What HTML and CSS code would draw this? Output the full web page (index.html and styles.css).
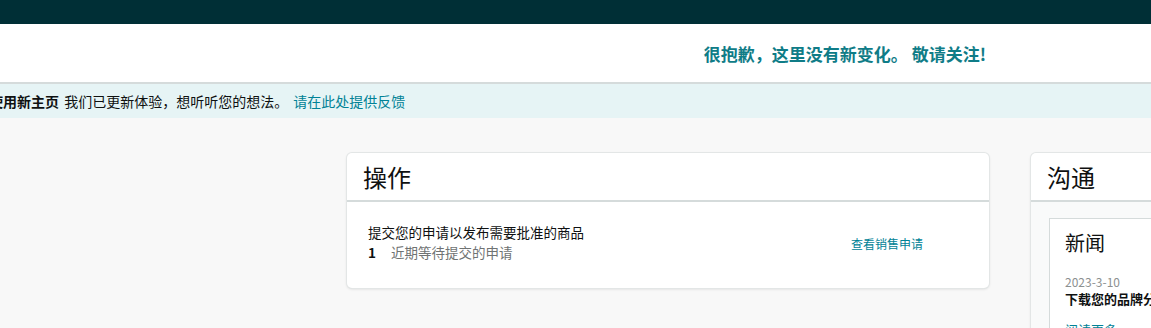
FILE: index.html
```html
<!DOCTYPE html>
<html lang="zh-CN">
<head>
<meta charset="utf-8">
<link rel="stylesheet" href="styles.css">
</head>
<body>
<div class="topbar"></div>
<header class="header">
  <p class="header-msg">很抱歉，这里没有新变化。 敬请关注!</p>
</header>
<div class="banner">
  <p class="banner-text"><b>使用新主页</b> 我们已更新体验，想听听您的想法。 <a class="link" href="#">请在此处提供反馈</a></p>
</div>
<main class="main">
  <section class="card card-actions">
    <div class="card-head"><h2 class="card-title">操作</h2></div>
    <div class="card-body actions-body">
      <div class="action-text">
        <div class="action-title">提交您的申请以发布需要批准的商品</div>
        <div class="action-count"><b>1</b><span>近期等待提交的申请</span></div>
      </div>
      <a class="action-link" href="#">查看销售申请</a>
    </div>
  </section>
  <section class="card card-comm">
    <div class="card-head"><h2 class="card-title">沟通</h2></div>
    <div class="card-body comm-body">
      <div class="news">
        <h3 class="news-title">新闻</h3>
        <div class="news-date">2023-3-10</div>
        <div class="news-headline">下载您的品牌分析报告</div>
        <a class="news-more" href="#">阅读更多</a>
      </div>
    </div>
  </section>
</main>
</body>
</html>
```

FILE: styles.css
```css
* { box-sizing: border-box; }
html, body { margin: 0; padding: 0; }
body {
  width: 1151px;
  height: 328px;
  overflow: hidden;
  background: #f8f8f8;
  font-family: "Noto Sans CJK SC", "Noto Sans", sans-serif;
  color: #0f1111;
}
.topbar { height: 24px; background: #002f36; }
.header {
  height: 60px;
  background: #fff;
  border-bottom: 2px solid #d5dbdb;
  display: flex;
  align-items: center;
  justify-content: flex-end;
  padding-right: 165px;
}
.header-msg {
  margin: 0;
  font-size: 17px;
  font-weight: 700;
  color: #0f7c87;
  line-height: 1;
  padding-top: 0;
}
.banner {
  height: 34px;
  background: #e6f4f5;
  display: flex;
  align-items: center;
}
.banner-text {
  margin: 0 0 0 -11px;
  font-size: 14px;
  line-height: 1;
  white-space: nowrap;
  color: #0f1111;
  word-spacing: 2px;
}
.banner-text b { font-weight: 700; }
.link { color: #008296; text-decoration: none; }
.main {
  display: flex;
  align-items: flex-start;
  gap: 42px;
  padding: 35px 0 0 347px;
}
.card {
  background: #fff;
  border-radius: 5px;
  box-shadow: 0 0 0 1px #e3e6e6, 0 1px 3px rgba(0,0,0,0.15);
  overflow: hidden;
  flex: none;
}
.card-actions { width: 642px; }
.card-comm { width: 400px; }
.card-head {
  height: 49px;
  border-bottom: 2px solid #d5dbdb;
  display: flex;
  align-items: center;
  padding-left: 16px;
}
.card-title {
  margin: 0;
  font-size: 24px;
  font-weight: 400;
  line-height: 1;
  color: #0f1111;
}
.actions-body {
  height: 86px;
  display: flex;
  align-items: flex-start;
  padding: 22px 0 0 21px;
}
.action-text { width: 483px; display: flex; flex-direction: column; gap: 4px; }
.action-title { font-size: 13.5px; line-height: 16px; }
.action-count { font-size: 13.5px; line-height: 16px; display: flex; gap: 15px; }
.action-count b { font-weight: 700; }
.action-count span { color: #6f7373; }
.action-link {
  color: #008296;
  text-decoration: none;
  font-size: 12px;
  line-height: 16px;
  margin-top: 12px;
}
.comm-body {
  background: #f9fafa;
  padding: 16px 0 0 18px;
  height: 140px;
}
.news {
  background: #fff;
  border: 1px solid #d5dbdb;
  height: 200px;
  padding: 10px 0 0 15px;
}
.news-title {
  margin: 0;
  font-size: 20px;
  font-weight: 400;
  line-height: 28px;
  color: #0f1111;
}
.news-date {
  margin-top: 17px;
  font-size: 12px;
  line-height: 16px;
  color: #8c9090;
}
.news-headline {
  font-size: 13px;
  line-height: 18px;
  font-weight: 700;
  color: #0f1111;
  white-space: nowrap;
}
.news-more {
  display: block;
  margin-top: 12px;
  font-size: 13px;
  color: #008296;
  text-decoration: none;
}
```
